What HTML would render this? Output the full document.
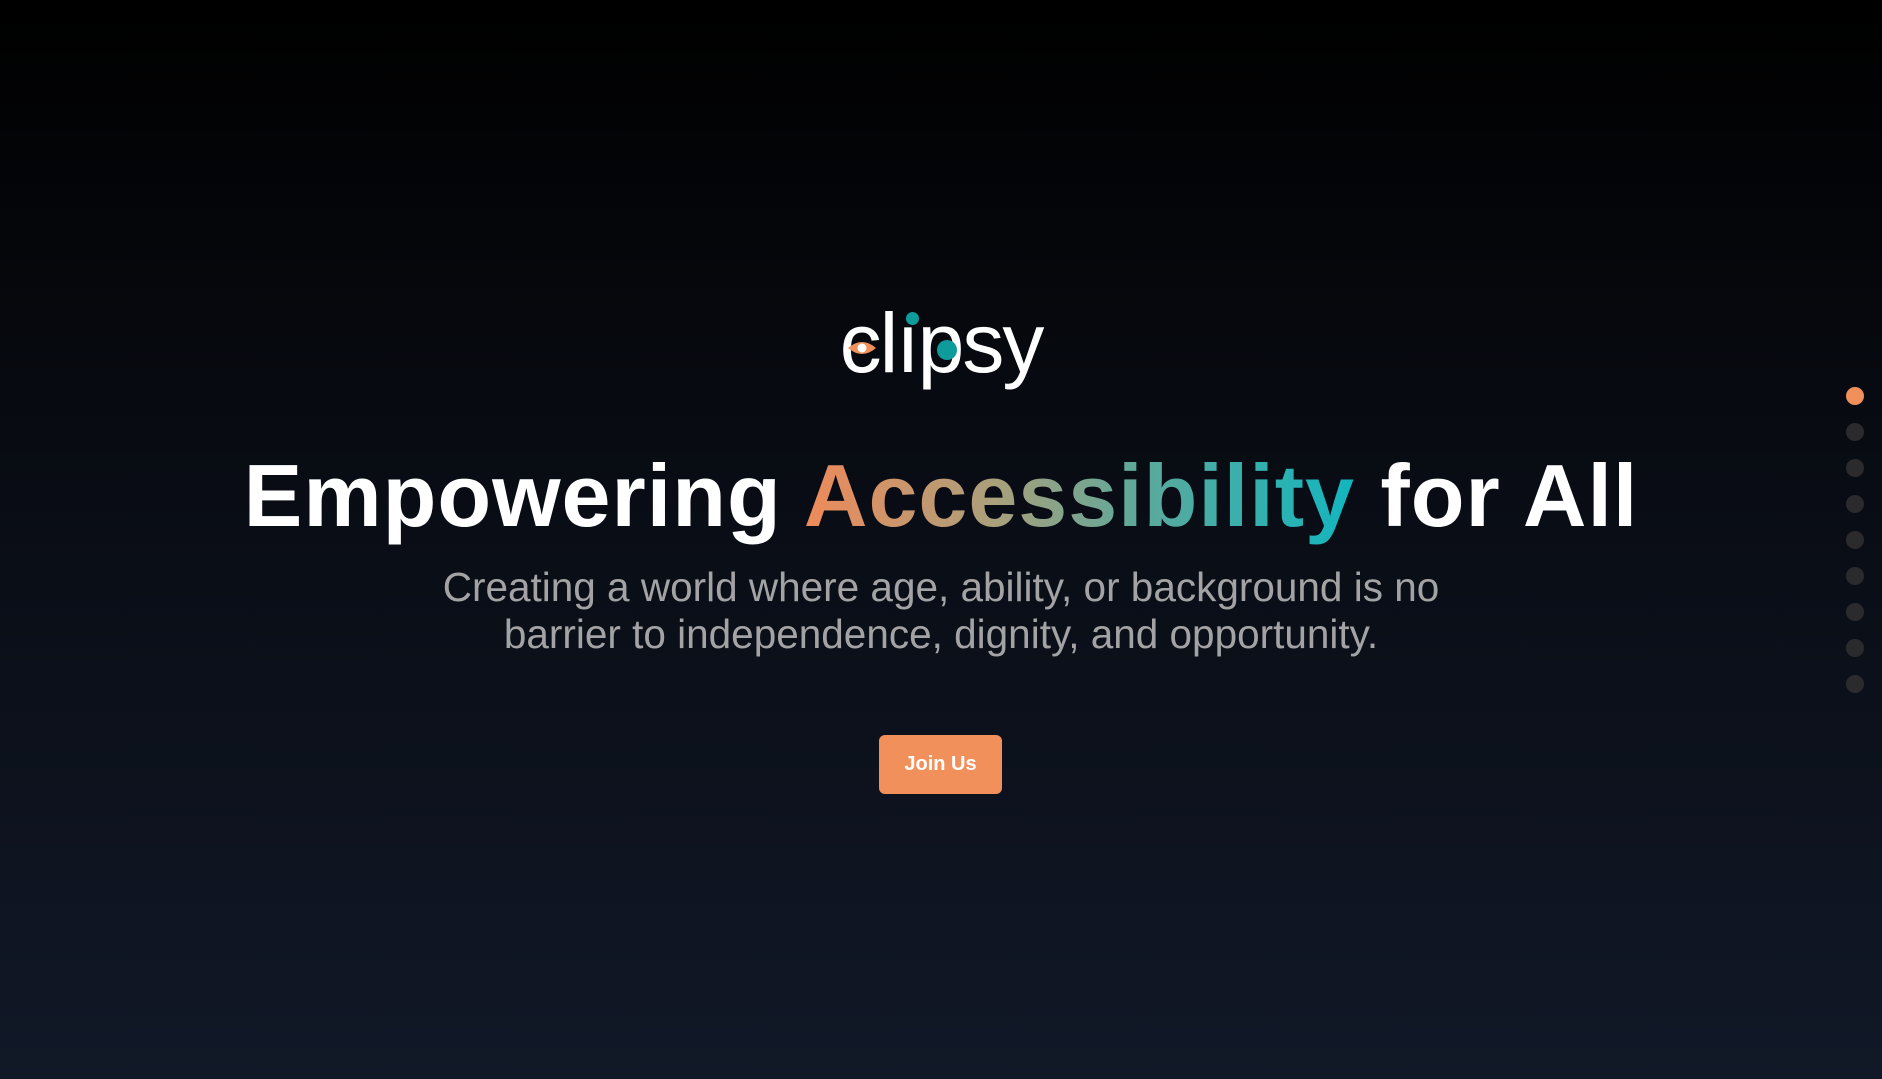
<!DOCTYPE html>
<html><head><meta charset="utf-8"><style>
html,body{margin:0;padding:0;width:1882px;height:1079px;overflow:hidden}
body{background:linear-gradient(180deg,#000 0%,#080b12 40%,#111827 100%);font-family:"Liberation Sans",sans-serif;position:relative}
.logo{position:absolute;left:0;width:1882px;top:293px;text-align:center;color:#fff;font-size:84px;letter-spacing:-2px;line-height:100px}
h1{position:absolute;left:0;width:1882px;top:446px;margin:0;text-align:center;color:#fff;font-size:88px;font-weight:700;letter-spacing:1px;line-height:100px;white-space:nowrap}
.g{background:linear-gradient(90deg,#ee8a5a,#a9a07c 35%,#5fa89a 60%,#12b6bf);-webkit-background-clip:text;background-clip:text;color:transparent}
.sub{position:absolute;left:0;width:1882px;top:564px;text-align:center;color:#a3a3a6;font-size:40.5px;line-height:47px;white-space:nowrap}
.btn{position:absolute;left:879px;top:735px;width:123px;height:59px;background:#f2905c;border-radius:6px;color:#fff;font-weight:700;font-size:20px;line-height:59px;text-align:center}
.dot{position:absolute;left:1846px;width:18px;height:18px;border-radius:50%;background:#2b2b2d}
.dot.a{background:#f2905c}
.m{position:absolute;border-radius:50%}
</style></head><body>
<div class="logo">clıpsy</div>
<div class="m" style="left:906px;top:312px;width:13px;height:13px;background:#0e9b9b"></div>
<div class="m" style="left:937px;top:340px;width:20px;height:20px;background:#0e9b9b"></div>
<svg style="position:absolute;left:846px;top:338px" width="32" height="20" viewBox="0 0 32 20"><path d="M2 10 Q16 -2 30 10 Q16 22 2 10Z" fill="#f2905c"/><circle cx="16" cy="10" r="4.5" fill="#fff"/></svg>
<h1>Empowering <span class="g">Accessibility</span> for All</h1>
<div class="sub">Creating a world where age, ability, or background is no<br>barrier to independence, dignity, and opportunity.</div>
<div class="btn">Join Us</div>
<div class="dot a" style="top:387px"></div>
<div class="dot" style="top:423px"></div>
<div class="dot" style="top:459px"></div>
<div class="dot" style="top:495px"></div>
<div class="dot" style="top:531px"></div>
<div class="dot" style="top:567px"></div>
<div class="dot" style="top:603px"></div>
<div class="dot" style="top:639px"></div>
<div class="dot" style="top:675px"></div>
</body></html>
